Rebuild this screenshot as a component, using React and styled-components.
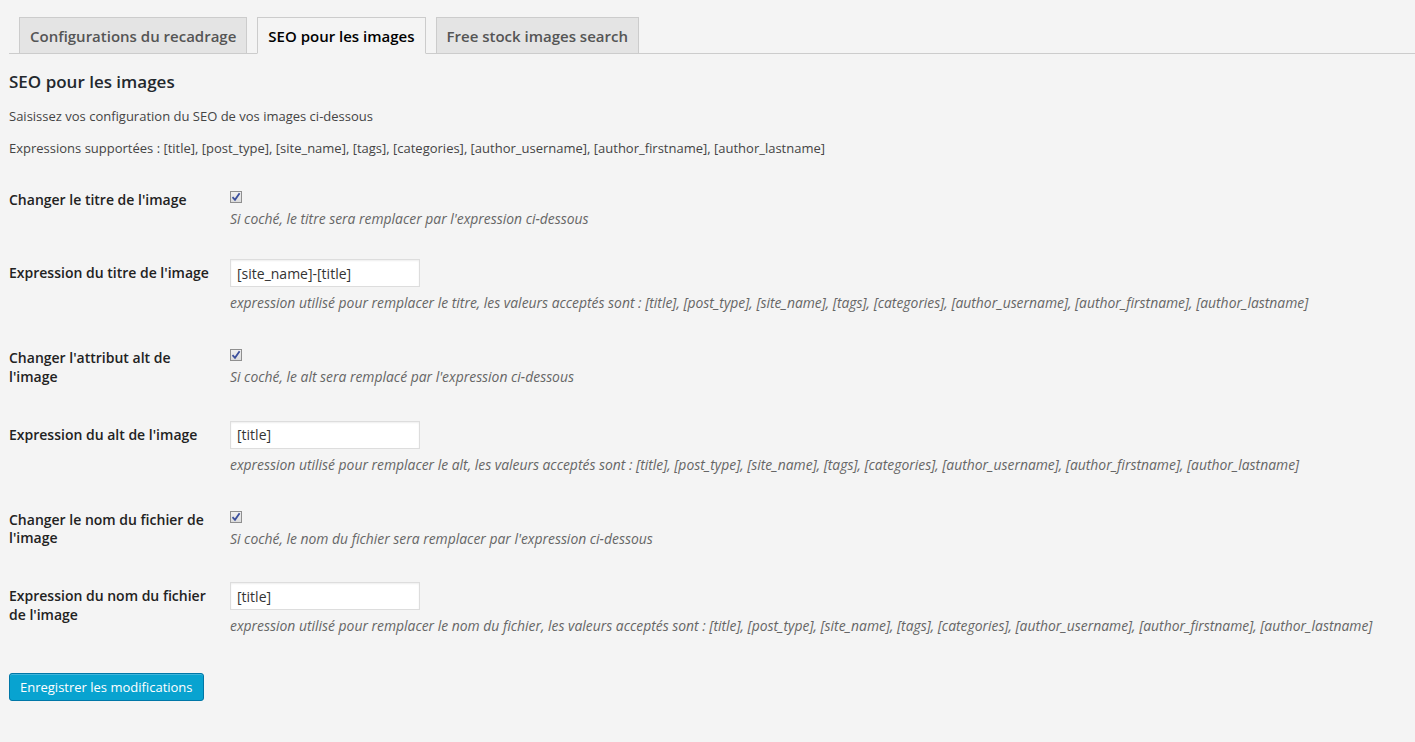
import React, { useState } from "react";
import styled, { createGlobalStyle } from "styled-components";

const GlobalStyle = createGlobalStyle`
  html, body {
    margin: 0;
    padding: 0;
    background: #f4f4f4;
  }
  body {
    font-family: "Open Sans", "Liberation Sans", sans-serif;
    color: #444;
    font-size: 13px;
  }
`;

const Page = styled.div`
  padding: 17px 0 40px 9px;
  min-height: 742px;
  box-sizing: border-box;
`;

const TabBar = styled.div`
  display: flex;
  border-bottom: 1px solid #ccc;
  padding-left: 10px;
  gap: 10px;
`;

const Tab = styled.button`
  font-family: "Open Sans", "Liberation Sans", sans-serif;
  font-size: 15px;
  font-weight: 600;
  line-height: 24px;
  padding: 6px 10px 5px;
  margin-bottom: -1px;
  border: 1px solid #ccc;
  border-bottom-color: ${(p) => (p.$active ? "#f4f4f4" : "#ccc")};
  background: ${(p) => (p.$active ? "#f4f4f4" : "#e4e4e4")};
  color: ${(p) => (p.$active ? "#000" : "#555")};
  cursor: pointer;
  outline: none;
`;

const Heading = styled.h3`
  font-size: 17px;
  font-weight: 600;
  color: #23282d;
  line-height: 22px;
  margin: 17px 0 14px;
`;

const Intro = styled.p`
  font-size: 13px;
  line-height: 19.5px;
  color: #444;
  margin: 0 0 12.5px;
`;

const Rows = styled.div`
  margin-top: 9px;
  display: flex;
  flex-direction: column;
`;

const Row = styled.div`
  display: grid;
  grid-template-columns: 221px 1fr;
  align-items: start;
`;

const Label = styled.div`
  padding: 20px 10px 19.5px 0;
  width: 200px;
  font-size: 14px;
  font-weight: 600;
  line-height: 18.5px;
  color: #222;
`;

const Field = styled.div`
  padding: ${(p) => (p.$check ? "20px 10px 16px 0" : "15px 10px 17px 0")};
  display: flex;
  flex-direction: column;
  align-items: flex-start;
  gap: ${(p) => (p.$check ? "7px" : "7px")};
`;

const Box = styled.span`
  width: 12px;
  height: 12px;
  box-sizing: border-box;
  border: 1px solid #8f8f8f;
  background: linear-gradient(#f0f0f0, #dcdcdc);
  display: flex;
  align-items: center;
  justify-content: center;
  cursor: pointer;
`;

const TextInput = styled.input`
  width: 190px;
  height: 28px;
  box-sizing: border-box;
  border: 1px solid #ddd;
  box-shadow: inset 0 1px 2px rgba(0, 0, 0, 0.07);
  background: #fff;
  font-family: "Open Sans", "Liberation Sans", sans-serif;
  font-size: 14px;
  color: #333;
  padding: 3px 6px;
  outline: none;
`;

const Description = styled.p`
  margin: 0;
  font-size: 13.9px;
  line-height: 18px;
  font-style: italic;
  color: #666;
  white-space: nowrap;
`;

const Submit = styled.button`
  margin-top: 21px;
  height: 28px;
  padding: 0 10px 1px;
  font-family: "Open Sans", "Liberation Sans", sans-serif;
  font-size: 13px;
  color: #fff;
  background: #08a3d0;
  border: 1px solid #0077a7;
  border-radius: 3px;
  box-shadow: inset 0 1px 0 rgba(120, 200, 230, 0.5);
  cursor: pointer;
`;

const Checkbox = ({ checked, onToggle }) => (
  <Box onClick={onToggle}>
    {checked && (
      <svg width="10" height="10" viewBox="0 0 10 10">
        <path d="M1.5 5.2 L4 7.8 L8.6 1.2" fill="none" stroke="#3b4f9c" strokeWidth="1.8" />
      </svg>
    )}
  </Box>
);

const expr =
  "[title], [post_type], [site_name], [tags], [categories], [author_username], [author_firstname], [author_lastname]";

const App = () => {
  const [tab, setTab] = useState(1);
  const [checks, setChecks] = useState([true, true, true]);
  const toggle = (i) => setChecks((c) => c.map((v, j) => (j === i ? !v : v)));

  return (
    <Page>
      <GlobalStyle />
      <TabBar>
        {["Configurations du recadrage", "SEO pour les images", "Free stock images search"].map((t, i) => (
          <Tab key={t} $active={tab === i} onClick={() => setTab(i)}>
            {t}
          </Tab>
        ))}
      </TabBar>
      <Heading>SEO pour les images</Heading>
      <Intro>Saisissez vos configuration du SEO de vos images ci-dessous</Intro>
      <Intro>Expressions supportées : {expr}</Intro>
      <Rows>
        <Row>
          <Label>Changer le titre de l'image</Label>
          <Field $check>
            <Checkbox checked={checks[0]} onToggle={() => toggle(0)} />
            <Description>Si coché, le titre sera remplacer par l'expression ci-dessous</Description>
          </Field>
        </Row>
        <Row>
          <Label>Expression du titre de l'image</Label>
          <Field>
            <TextInput defaultValue="[site_name]-[title]" />
            <Description>
              expression utilisé pour remplacer le titre, les valeurs acceptés sont : {expr}
            </Description>
          </Field>
        </Row>
        <Row>
          <Label>Changer l'attribut alt de l'image</Label>
          <Field $check>
            <Checkbox checked={checks[1]} onToggle={() => toggle(1)} />
            <Description>Si coché, le alt sera remplacé par l'expression ci-dessous</Description>
          </Field>
        </Row>
        <Row>
          <Label>Expression du alt de l'image</Label>
          <Field>
            <TextInput defaultValue="[title]" />
            <Description>
              expression utilisé pour remplacer le alt, les valeurs acceptés sont : {expr}
            </Description>
          </Field>
        </Row>
        <Row>
          <Label>Changer le nom du fichier de l'image</Label>
          <Field $check>
            <Checkbox checked={checks[2]} onToggle={() => toggle(2)} />
            <Description>Si coché, le nom du fichier sera remplacer par l'expression ci-dessous</Description>
          </Field>
        </Row>
        <Row>
          <Label>Expression du nom du fichier de l'image</Label>
          <Field>
            <TextInput defaultValue="[title]" />
            <Description>
              expression utilisé pour remplacer le nom du fichier, les valeurs acceptés sont : {expr}
            </Description>
          </Field>
        </Row>
      </Rows>
      <Submit>Enregistrer les modifications</Submit>
    </Page>
  );
};

export default App;
